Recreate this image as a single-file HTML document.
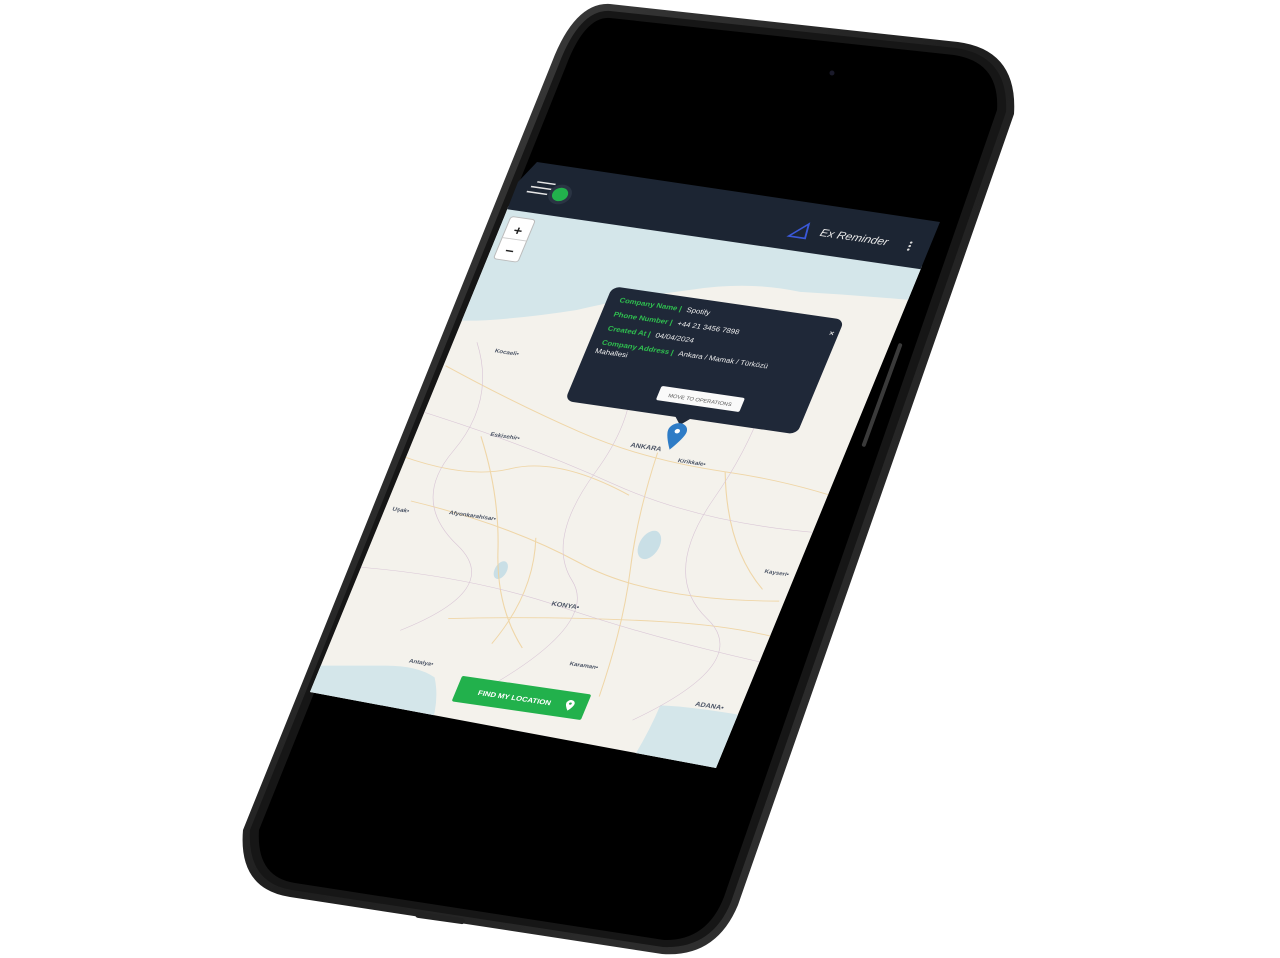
<!DOCTYPE html>
<html><head><meta charset="utf-8"><style>
html,body{margin:0;padding:0;background:#fff;width:1280px;height:958px;overflow:hidden}
svg{display:block}
text{font-family:"Liberation Sans",sans-serif}
</style></head><body>
<svg width="1280" height="958" viewBox="0 0 1280 958" xmlns="http://www.w3.org/2000/svg">
<defs>
<clipPath id="scr"><path d="M537,162 L940,222 L716,768 L310,692 L505,215 L518,182 Z"/></clipPath>
<linearGradient id="frame" x1="0" y1="0" x2="1" y2="1">
<stop offset="0" stop-color="#4a4a4a"/><stop offset="0.5" stop-color="#1e1e1e"/><stop offset="1" stop-color="#3a3a3a"/></linearGradient>
</defs>
<path d="M610,4 L958,42 Q1018,50 1014,114 L738,905 Q716,958 662,954 L290,897 Q238,889 243,830 L552,62 Q575,2 610,4 Z" fill="url(#frame)"/>
<path d="M610,11 L956,48 Q1009,56 1006,112 L731,902 Q712,949 663,947 L292,890 Q247,883 250,830 L559,64 Q580,9 610,11 Z" fill="#161616"/>
<path d="M610,18 L954,55 Q1000,62 997,110 L724,897 Q707,941 664,940 L295,883 Q256,877 259,830 L566,66 Q585,16 610,18 Z" fill="#000"/>
<rect x="880" y="340" width="4" height="110" rx="2" fill="#3a3a3a" transform="rotate(20 882 395)"/>
<circle cx="832" cy="73" r="2.5" fill="#1a1a2a"/>
<g clip-path="url(#scr)">
<g transform="matrix(1.0175,0.1475,-0.367,0.8817,530,163)">
<rect x="-60" y="50" width="520" height="600" fill="#f4f2ec"/>
<path d="M-60,50 L460,50 L460,85 Q380,88 300,96 Q250,92 200,110 Q140,130 100,150 Q60,165 20,175 Q0,180 -60,185 Z" fill="#d4e6ea"/>
<path d="M60,560 Q90,555 110,565 Q130,600 125,650 L-60,650 L-60,580 Q0,570 60,560 Z" fill="#d4e6ea"/>
<path d="M330,560 Q370,555 460,560 L460,650 L320,650 Q330,600 330,560 Z" fill="#d4e6ea"/>
<ellipse cx="258" cy="390" rx="10" ry="16" fill="#c9dfe6"/>
<ellipse cx="130" cy="440" rx="6" ry="10" fill="#c9dfe6"/>
<g stroke="#efd3a0" stroke-width="1" fill="none" opacity="0.9">
<path d="M0,230 Q80,260 150,280 T300,300 T460,320"/>
<path d="M230,290 Q235,360 250,420 T270,560"/>
<path d="M60,300 Q100,360 120,420 T180,520"/>
<path d="M20,380 Q120,390 200,420 T400,430"/>
<path d="M100,500 Q200,480 300,470 T460,480"/>
<path d="M300,300 Q330,380 380,420"/>
<path d="M-20,330 Q60,350 100,330 T220,340"/>
<path d="M150,400 Q170,460 150,520"/>
</g>
<g stroke="#d9c6d6" stroke-width="0.6" fill="none">
<path d="M20,200 Q60,260 40,320 T80,420 T60,520"/>
<path d="M160,180 Q200,240 180,320 T200,440 T170,560"/>
<path d="M300,150 Q320,240 300,330 T340,460 T310,580"/>
<path d="M-20,280 Q100,300 200,330 T420,350"/>
<path d="M-20,460 Q100,450 200,470 T430,500"/>
</g>
<g font-size="6" fill="#4c5566" font-weight="bold">
<text x="40" y="208">Kocaeli•</text>
<text x="68" y="298">Eskisehir•</text>
<text x="202" y="288" font-size="7">ANKARA</text>
<text x="252" y="297">Kirikkale•</text>
<text x="6" y="393">Uşak•</text>
<text x="60" y="388">Afyonkarahisar•</text>
<text x="375" y="402">Kayseri•</text>
<text x="190" y="470" font-size="7">KONYA•</text>
<text x="80" y="553">Antalya•</text>
<text x="230" y="531">Karaman•</text>
<text x="362" y="555" font-size="7">ADANA•</text>
</g>
<rect x="3" y="60" width="24" height="48" rx="3" fill="#fff" stroke="#bbb" stroke-width="1"/>
<line x1="3" y1="84" x2="27" y2="84" stroke="#ccc"/>
<text x="15" y="79" font-size="14" text-anchor="middle" fill="#222" font-weight="bold">+</text>
<text x="15" y="102" font-size="14" text-anchor="middle" fill="#222" font-weight="bold">−</text>
<rect x="-60" y="-20" width="520" height="73" fill="#1c2533"/>
<g stroke="#e6e6e6" stroke-width="1.6">
<line x1="14" y1="19" x2="32" y2="19"/><line x1="10" y1="25" x2="30" y2="25"/><line x1="8" y1="31" x2="28" y2="31"/>
</g>
<circle cx="40" cy="29" r="11" fill="#2a3443"/>
<circle cx="40" cy="29" r="7.5" fill="#22b14c"/>
<path d="M268,38 L282,22 L284,38 Z" fill="none" stroke="#3a58d8" stroke-width="1.8"/>
<text x="296" y="33" font-size="11.5" fill="#e8e8e8" font-style="italic">Ex Reminder</text>
<g fill="#ddd"><circle cx="384" cy="26" r="1.2"/><circle cx="384" cy="30" r="1.2"/><circle cx="384" cy="34" r="1.2"/></g>
<rect x="124" y="119" width="228" height="130" rx="8" fill="#1f2838"/>
<path d="M232,248 L240,257 L248,248 Z" fill="#1f2838"/>
<text x="343" y="138" font-size="8" fill="#ddd" font-weight="bold">×</text>
<g font-size="7.5">
<text x="136" y="135"><tspan fill="#2fbf4f" font-weight="bold">Company Name | </tspan><tspan fill="#eee" dx="3">Spotify</tspan></text>
<text x="136" y="151"><tspan fill="#2fbf4f" font-weight="bold">Phone Number | </tspan><tspan fill="#eee" dx="3">+44 21 3456 7898</tspan></text>
<text x="136" y="167"><tspan fill="#2fbf4f" font-weight="bold">Created At | </tspan><tspan fill="#eee" dx="3">04/04/2024</tspan></text>
<text x="136" y="183"><tspan fill="#2fbf4f" font-weight="bold">Company Address | </tspan><tspan fill="#eee" dx="3">Ankara / Mamak / Türközü</tspan></text>
<text x="133" y="193" fill="#eee">Mahallesi</text>
</g>
<rect x="208" y="218" width="82" height="16" rx="2" fill="#fafafa"/>
<text x="249" y="229" font-size="5.5" fill="#555" text-anchor="middle">MOVE TO OPERATIONS</text>
<path d="M240,285 Q231,270 231,264 A9,9 0 1 1 249,264 Q249,270 240,285 Z" fill="#2e7cc6"/>
<circle cx="240" cy="264" r="2.5" fill="#fff"/>
<rect x="135" y="559" width="127" height="29" rx="2" fill="#22b14c"/>
<text x="192" y="577" font-size="7.5" fill="#fff" text-anchor="middle" font-weight="bold">FIND MY LOCATION</text>
<path d="M246,580 Q242,575 242,572 A4,4 0 1 1 250,572 Q250,575 246,580 Z" fill="#fff"/>
<circle cx="246" cy="572" r="1.3" fill="#22b14c"/>
</g>
</g>
<rect x="415" y="915" width="50" height="6" rx="3" fill="#222" transform="rotate(8 440 918)"/>
</svg>
</body></html>
